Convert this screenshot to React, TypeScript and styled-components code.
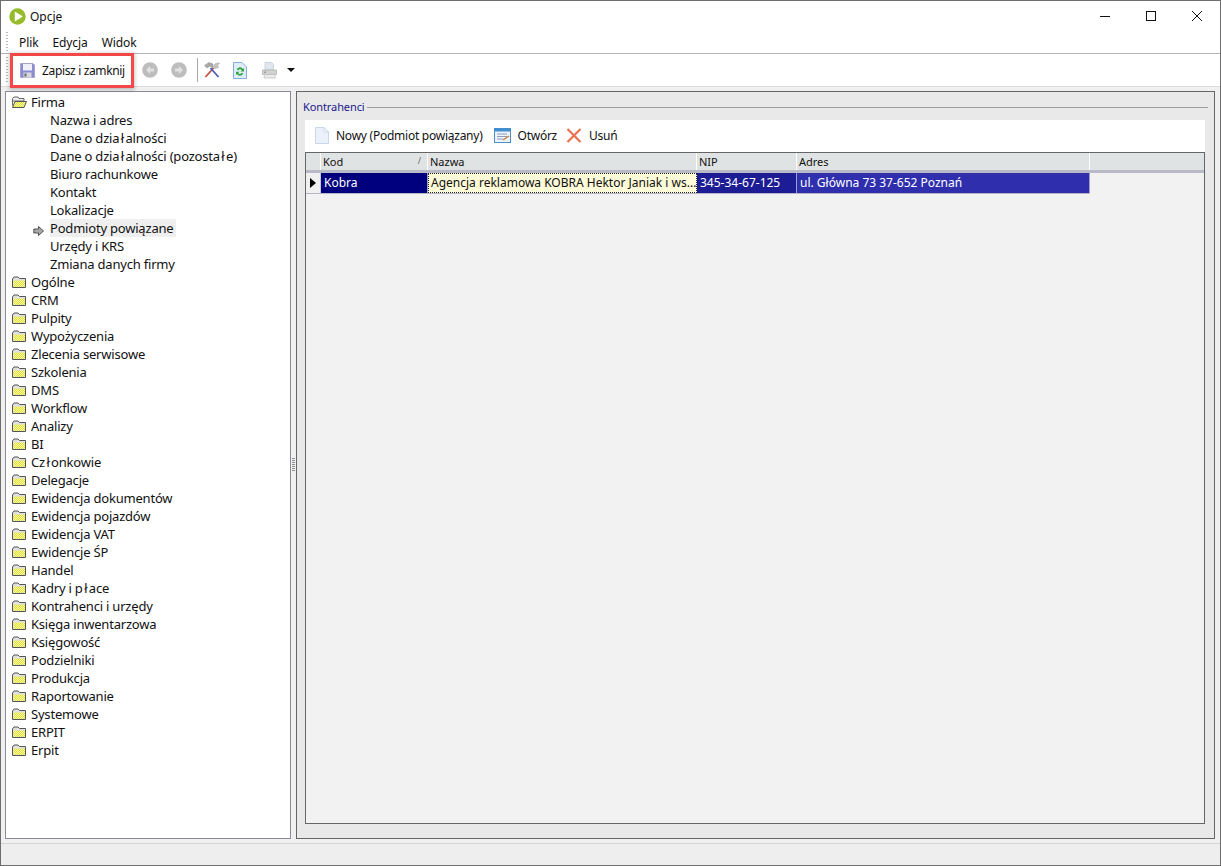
import React from 'react';
import styled, { createGlobalStyle } from 'styled-components';

const GlobalStyle = createGlobalStyle`
  html, body {
    margin: 0;
    padding: 0;
    background: #f0f0f0;
  }
  body {
    font-family: "Noto Sans", "Liberation Sans", sans-serif;
    font-size: 12px;
    color: #111;
  }
`;

const Window = styled.div`
  width: 1221px;
  height: 866px;
  box-sizing: border-box;
  border: 1px solid #6e6e6e;
  display: flex;
  flex-direction: column;
  overflow: hidden;
  background: #f0f0f0;
`;

const TitleBar = styled.div`
  height: 30px;
  flex: none;
  background: #fff;
  display: flex;
  align-items: center;
  padding-left: 8px;
  gap: 4px;
`;

const TitleText = styled.span`
  font-size: 12px;
  flex: 1;
`;

const WindowButtons = styled.div`
  display: flex;
  align-items: center;
  height: 100%;
`;

const WindowButton = styled.div`
  width: 46px;
  height: 100%;
  display: flex;
  align-items: center;
  justify-content: center;
  margin-top: -1px;
`;

const MenuBar = styled.div`
  height: 22px;
  flex: none;
  background: #fff;
  border-bottom: 1px solid #b4b4be;
  display: flex;
  align-items: center;
  padding-left: 5px;
`;

const Grip = styled.div<{ $height: number }>`
  width: 2px;
  height: ${p => p.$height}px;
  margin-right: 4px;
  background-image: linear-gradient(#b8b8b8 50%, transparent 50%);
  background-size: 2px 3px;
`;

const MenuItem = styled.span`
  padding: 0 7px 0 7px;
  font-size: 12px;
  letter-spacing: -0.1px;
`;

const ToolBar = styled.div`
  height: 32px;
  flex: none;
  background: #fff;
  border-bottom: 1px solid #dcdcdc;
  display: flex;
  align-items: center;
  padding-left: 5px;
`;

const SaveButton = styled.div`
  width: 118px;
  height: 29px;
  margin: 1px 10px 0 1px;
  box-sizing: border-box;
  display: flex;
  align-items: center;
  padding-left: 7px;
  gap: 7px;
  font-size: 12px;
  letter-spacing: -0.35px;
  white-space: nowrap;
  background: #fff;
  box-shadow: 0 0 0 3px #f4474a, 0 1px 4px 4px rgba(0, 0, 0, 0.22);
  position: relative;
  z-index: 1;
`;

const ToolIcon = styled.div<{ $gap?: number }>`
  width: 18px;
  height: 18px;
  margin-right: ${p => p.$gap ?? 0}px;
  display: flex;
  align-items: center;
  justify-content: center;
`;

const ToolSeparator = styled.div`
  width: 1px;
  height: 24px;
  background: #a8a8a8;
  margin: 0 5px 0 9px;
`;

const Main = styled.div`
  flex: 1;
  display: flex;
  min-height: 0;
  padding: 4px 5px 4px 4px;
`;

const TreePanel = styled.div`
  width: 286px;
  flex: none;
  box-sizing: border-box;
  background: #fff;
  border: 1px solid #8a8a9a;
  padding-top: 1px;
`;

const TreeRow = styled.div<{ $child?: boolean }>`
  height: 18px;
  display: flex;
  align-items: center;
  padding-left: ${p => (p.$child ? 44 : 5)}px;
  gap: 4px;
  position: relative;
  font-size: 13px;
  letter-spacing: -0.2px;
  white-space: pre;
`;

const TreeLabel = styled.span<{ $active?: boolean }>`
  background: ${p => (p.$active ? '#efefef' : 'transparent')};
  line-height: 18px;
  padding-right: 3px;
`;

const WideLetter = styled.span`
  margin: 0 1.5px;
`;

const CurrentArrow = styled.div`
  position: absolute;
  left: 27px;
  top: 3px;
  width: 11px;
  height: 10px;
`;

const Splitter = styled.div`
  width: 5px;
  flex: none;
  display: flex;
  align-items: center;
  justify-content: center;
`;

const SplitterDots = styled.div`
  width: 3px;
  height: 14px;
  background-image: linear-gradient(#8e8e8e 50%, transparent 50%);
  background-size: 3px 2px;
`;

const ContentPanel = styled.div`
  flex: 1;
  box-sizing: border-box;
  background: #e9e9e9;
  border: 1px solid #666;
  padding: 5px 9px 14px 8px;
  display: flex;
  flex-direction: column;
`;

const GroupHeader = styled.div`
  height: 21px;
  flex: none;
  display: flex;
  align-items: center;
  gap: 2px;
  margin: 0 -3px 0 -2px;
`;

const GroupTitle = styled.span`
  font-size: 11px;
  letter-spacing: -0.1px;
  color: #1a1a8c;
  position: relative;
  top: -1px;
`;

const GroupLine = styled.div`
  flex: 1;
  height: 1px;
  background: #9a9a9a;
`;

const ActionBar = styled.div`
  height: 32px;
  flex: none;
  background: #fff;
  display: flex;
  align-items: center;
  padding-left: 10px;
  margin-top: 2px;
`;

const Action = styled.div<{ $gap: number }>`
  display: flex;
  align-items: center;
  gap: 7px;
  margin-right: ${p => p.$gap}px;
  font-size: 12px;
  letter-spacing: -0.25px;
  position: relative;
  top: -1px;
`;

const Grid = styled.div`
  flex: 1;
  box-sizing: border-box;
  background: #f2f2f2;
  border: 1px solid #666;
`;

const GridHeader = styled.div`
  display: flex;
  height: 20px;
  box-sizing: border-box;
  background: #e0e3e3;
  border-bottom: 3px solid #b9b9c8;
`;

const HeaderCell = styled.div<{ $width: number }>`
  width: ${p => p.$width}px;
  flex: none;
  box-sizing: border-box;
  border-right: 1px solid #fff;
  padding-left: 2px;
  font-size: 11px;
  line-height: 17px;
  position: relative;
`;

const SortMark = styled.span`
  position: absolute;
  right: 6px;
  top: -1px;
  font-size: 9px;
  color: #666;
`;

const GridRow = styled.div`
  display: flex;
  width: fit-content;
  height: 21px;
  box-sizing: border-box;
  border-bottom: 1px solid #b6b6c6;
`;

const Indicator = styled.div`
  width: 15px;
  flex: none;
  background: #f0f0f0;
  display: flex;
  align-items: center;
  justify-content: center;
  box-sizing: border-box;
  border-right: 1px solid #c8c8d0;
`;

const RowCell = styled.div<{ $width: number; $bg: string; $focus?: boolean }>`
  width: ${p => p.$width}px;
  flex: none;
  box-sizing: border-box;
  background: ${p => p.$bg};
  color: ${p => (p.$focus ? '#111' : '#fff')};
  border-right: ${p => (p.$focus ? 'none' : '1px solid #9c9cc8')};
  outline: ${p => (p.$focus ? '1px dotted #222' : 'none')};
  outline-offset: -1px;
  padding-left: 3px;
  font-size: 12px;
  line-height: 20px;
  white-space: nowrap;
  overflow: hidden;
`;

const StatusBar = styled.div`
  height: 22px;
  flex: none;
  box-sizing: border-box;
  background: #eee;
  border-top: 1px solid #d6d6d6;
`;

const LogoIcon = () => (
  <svg width="17" height="17" viewBox="0 0 17 17">
    <circle cx="8.5" cy="8.5" r="8.2" fill="#96bb2b" />
    <path d="M5.8 4 Q5.5 3.4 6.2 3.7 L13.2 8 Q13.7 8.5 13.2 9 L6.2 13.3 Q5.5 13.6 5.8 13 Z" fill="#fff" />
  </svg>
);

const FloppyIcon = () => (
  <svg width="15" height="15" viewBox="0 0 15 15">
    <path d="M0.5 0.5 H13 L14.5 2 V14.5 H0.5 Z" fill="#8c8cd0" stroke="#8f8fb8" strokeWidth="0.6" />
    <rect x="3" y="1" width="9" height="6.5" fill="#f0f0fa" />
    <rect x="3.5" y="9.5" width="8" height="5" fill="#d8d8e0" />
    <rect x="4.5" y="10.5" width="2" height="3" fill="#666" />
  </svg>
);

const NavIcon = ({ right }: { right?: boolean }) => (
  <svg width="16" height="16" viewBox="0 0 16 16">
    <circle cx="8" cy="8" r="7.8" fill="#bdbdbd" />
    <path
      d={right ? 'M8 4 L12 8 L8 12 V9.4 H4 V6.6 H8 Z' : 'M8 4 L4 8 L8 12 V9.4 H12 V6.6 H8 Z'}
      fill="#e2e2e2"
    />
  </svg>
);

const ToolsIcon = () => (
  <svg width="18" height="18" viewBox="0 0 18 18">
    <path d="M2.5 16 L10.5 7" stroke="#c9504a" strokeWidth="1.8" />
    <path d="M15.5 16 L7.5 7" stroke="#4a5cb8" strokeWidth="1.8" />
    <path d="M1.5 4.5 L6 1.5 L10 3 L9.5 7 L7 5 L4 7 Z" fill="#a8a8a8" stroke="#8a8a8a" strokeWidth="0.5" />
    <path d="M10 6 L12.5 2.5 L16.5 2 L14.5 4.5 L15.5 6.5 L12 7.5 Z" fill="#c4c4c4" stroke="#999" strokeWidth="0.5" />
  </svg>
);

const RefreshDocIcon = () => (
  <svg width="14" height="17" viewBox="0 0 14 17">
    <path d="M0.5 0.5 H9 L13.5 5 V16.5 H0.5 Z" fill="#dfedfb" stroke="#86add4" />
    <path d="M3.8 7.5 A3.4 3.4 0 0 1 10 7 L11 6 V9.5 H7.5 L8.8 8.2 A2 2 0 0 0 5.3 8.4 Z" fill="#2fa63a" />
    <path d="M10.2 11.5 A3.4 3.4 0 0 1 4 12 L3 13 V9.8 H6.5 L5.2 11 A2 2 0 0 0 8.7 10.8 Z" fill="#2fa63a" />
  </svg>
);

const PrinterIcon = () => (
  <svg width="17" height="17" viewBox="0 0 17 17">
    <path d="M4 0.5 H10.5 L12.5 2.5 V8 H4 Z" fill="#dfe6ef" stroke="#bcc5d0" strokeWidth="0.7" />
    <path d="M1.5 8 H15.5 V12.5 H1.5 Z" fill="#d2d2d2" stroke="#adadad" strokeWidth="0.7" />
    <path d="M3.5 12.5 H13.5 L14.5 16 H3 Z" fill="#ececec" stroke="#bababa" strokeWidth="0.7" />
    <rect x="3" y="9.5" width="2" height="1.4" fill="#9a9a9a" />
  </svg>
);

const CaretIcon = () => (
  <svg width="8" height="4" viewBox="0 0 8 4">
    <path d="M0 0 H8 L4 4 Z" fill="#111" />
  </svg>
);

const FolderIcon = ({ open, id }: { open?: boolean; id: string }) => (
  <svg width="16" height="12" viewBox="0 0 16 12" style={{ flex: 'none' }}>
    <defs>
      <pattern id={id} width="2" height="2" patternUnits="userSpaceOnUse">
        <rect width="2" height="2" fill="#ffff9c" />
        <rect width="1" height="1" fill="#dcdc40" />
        <rect x="1" y="1" width="1" height="1" fill="#dcdc40" />
      </pattern>
    </defs>
    {open ? (
      <>
        <path d="M1.5 9.5 V2.5 L3 1 H7 L8 2.5 H13 V5 H1.5" fill="#efefef" stroke="#666" />
        <path d="M1.5 11.5 L4 5.5 H15.5 L13 11.5 Z" fill={`url(#${id})`} stroke="#555" />
      </>
    ) : (
      <>
        <path d="M1.5 3 L3 1 H7 L8.5 2.5 H14.5 V11.5 H1.5 Z" fill="#e0e0e0" stroke="#555" />
        <path d="M2.5 4.5 H14 V10.8 H2.5 Z" fill={`url(#${id})`} />
      </>
    )}
  </svg>
);

const GrayArrow = () => (
  <svg width="11" height="10" viewBox="0 0 11 10">
    <path d="M5.5 0.5 L10.5 5 L5.5 9.5 V7 H0.8 V3 H5.5 Z" fill="#a8a8a8" stroke="#333" strokeWidth="0.8" />
  </svg>
);

const NewDocIcon = () => (
  <svg width="14" height="17" viewBox="0 0 14 17">
    <path d="M0.5 0.5 H9 L13.5 5 V16.5 H0.5 Z" fill="#eaf1fb" stroke="#cbd7e8" />
    <path d="M9 0.5 V5 H13.5 Z" fill="#fff" stroke="#cbd7e8" />
  </svg>
);

const FormIcon = () => (
  <svg width="17" height="15" viewBox="0 0 17 15">
    <rect x="0.5" y="0.5" width="16" height="14" fill="#eef3fa" stroke="#4d8fc9" />
    <rect x="0.5" y="0.5" width="16" height="3" fill="#3f8ed0" />
    <path d="M3 6 H13 M3 8.5 H13 M3 11 H9" stroke="#8a9fc0" />
    <path d="M9 12 L15 8" stroke="#d07a3a" strokeWidth="1.4" />
  </svg>
);

const CrossIcon = () => (
  <svg width="16" height="15" viewBox="0 0 16 15">
    <path d="M1.5 1 L14.5 14 M14.5 1 L1.5 14" stroke="#e8724f" strokeWidth="2.2" />
  </svg>
);

const RowArrow = () => (
  <svg width="6" height="10" viewBox="0 0 6 10">
    <path d="M0 0 L6 5 L0 10 Z" fill="#000" />
  </svg>
);

const MinimizeIcon = () => (
  <svg width="10" height="10" viewBox="0 0 10 10">
    <path d="M0 5.5 H10" stroke="#111" />
  </svg>
);

const MaximizeIcon = () => (
  <svg width="10" height="10" viewBox="0 0 10 10">
    <rect x="0.5" y="0.5" width="9" height="9" fill="none" stroke="#111" />
  </svg>
);

const CloseIcon = () => (
  <svg width="10" height="10" viewBox="0 0 10 10">
    <path d="M0 0 L10 10 M10 0 L0 10" stroke="#111" strokeWidth="1" />
  </svg>
);

const withWideLetters = (text: string) =>
  text.split(/(ł)/).map((part, i) => (part === 'ł' ? <WideLetter key={i}>ł</WideLetter> : part));

const firmaItems = [
  'Nazwa i adres',
  'Dane o działalności',
  'Dane o działalności (pozostałe)',
  'Biuro rachunkowe',
  'Kontakt',
  'Lokalizacje',
  'Podmioty powiązane',
  'Urzędy i KRS',
  'Zmiana danych firmy',
];

const folders = [
  'Ogólne', 'CRM', 'Pulpity', 'Wypożyczenia', 'Zlecenia serwisowe', 'Szkolenia', 'DMS',
  'Workflow', 'Analizy', 'BI', 'Członkowie', 'Delegacje', 'Ewidencja dokumentów',
  'Ewidencja pojazdów', 'Ewidencja VAT', 'Ewidencje ŚP', 'Handel', 'Kadry i płace',
  'Kontrahenci i urzędy', 'Księga inwentarzowa', 'Księgowość', 'Podzielniki', 'Produkcja',
  'Raportowanie', 'Systemowe', 'ERPIT', 'Erpit',
];

export default function App() {
  return (
    <>
      <GlobalStyle />
      <Window>
        <TitleBar>
          <LogoIcon />
          <TitleText>Opcje</TitleText>
          <WindowButtons>
            <WindowButton><MinimizeIcon /></WindowButton>
            <WindowButton><MaximizeIcon /></WindowButton>
            <WindowButton><CloseIcon /></WindowButton>
          </WindowButtons>
        </TitleBar>
        <MenuBar>
          <Grip $height={20} />
          <MenuItem>Plik</MenuItem>
          <MenuItem>Edycja</MenuItem>
          <MenuItem>Widok</MenuItem>
        </MenuBar>
        <ToolBar>
          <Grip $height={26} />
          <SaveButton>
            <FloppyIcon />
            Zapisz i zamknij
          </SaveButton>
          <ToolIcon $gap={11}><NavIcon /></ToolIcon>
          <ToolIcon><NavIcon right /></ToolIcon>
          <ToolSeparator />
          <ToolIcon $gap={10}><ToolsIcon /></ToolIcon>
          <ToolIcon $gap={11}><RefreshDocIcon /></ToolIcon>
          <ToolIcon $gap={9}><PrinterIcon /></ToolIcon>
          <CaretIcon />
        </ToolBar>
        <Main>
          <TreePanel>
            <TreeRow>
              <FolderIcon open id="folder-open" />
              Firma
            </TreeRow>
            {firmaItems.map((item, i) => (
              <TreeRow $child key={item}>
                {i === 6 && <CurrentArrow><GrayArrow /></CurrentArrow>}
                <TreeLabel $active={i === 6}>{withWideLetters(item)}</TreeLabel>
              </TreeRow>
            ))}
            {folders.map((item, i) => (
              <TreeRow key={item}>
                <FolderIcon id={`folder-${i}`} />
                <span>{withWideLetters(item)}</span>
              </TreeRow>
            ))}
          </TreePanel>
          <Splitter><SplitterDots /></Splitter>
          <ContentPanel>
            <GroupHeader>
              <GroupTitle>Kontrahenci</GroupTitle>
              <GroupLine />
            </GroupHeader>
            <ActionBar>
              <Action $gap={11}><NewDocIcon />Nowy (Podmiot powiązany)</Action>
              <Action $gap={9}><FormIcon />Otwórz</Action>
              <Action $gap={0}><CrossIcon />Usuń</Action>
            </ActionBar>
            <Grid>
              <GridHeader>
                <HeaderCell $width={15} />
                <HeaderCell $width={107}>Kod<SortMark>/</SortMark></HeaderCell>
                <HeaderCell $width={269}>Nazwa</HeaderCell>
                <HeaderCell $width={100}>NIP</HeaderCell>
                <HeaderCell $width={293}>Adres</HeaderCell>
              </GridHeader>
              <GridRow>
                <Indicator><RowArrow /></Indicator>
                <RowCell $width={107} $bg="#00007f">Kobra</RowCell>
                <RowCell $width={269} $bg="#fdfbd8" $focus>Agencja reklamowa KOBRA Hektor Janiak i ws...</RowCell>
                <RowCell $width={100} $bg="#1c1c94">345-34-67-125</RowCell>
                <RowCell $width={293} $bg="#2f2fae">ul. Główna 73 37-652 Poznań</RowCell>
              </GridRow>
            </Grid>
          </ContentPanel>
        </Main>
        <StatusBar />
      </Window>
    </>
  );
}
